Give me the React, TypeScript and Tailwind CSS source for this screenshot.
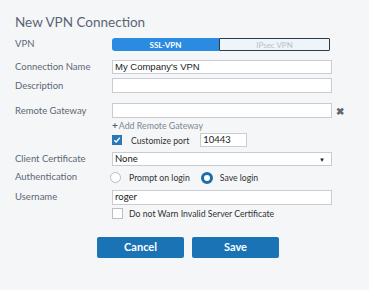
import React from "react";

const Label = ({ children }: { children: React.ReactNode }) => (
  <div className="w-[97px] shrink-0 text-[9.5px] text-[#5d6873]">{children}</div>
);

const Input = ({ value, className = "h-[15px] text-[9.5px]" }: { value?: string; className?: string }) => (
  <div
    className={`w-[220px] border border-[#c9cdd1] bg-white px-[2px] flex items-center text-[#222] leading-none ${className}`}
  >
    {value}
  </div>
);

export default function App() {
  return (
    <div
      className="w-[369px] h-[290px] bg-[#f5f6f8] pl-[15px] pt-[12px]"
      style={{ fontFamily: "Lato, 'Open Sans', sans-serif" }}
    >
      <div className="text-[13.5px] leading-[20px] text-[#5a6572]">New VPN Connection</div>

      <div className="mt-[6px] flex items-center h-[13px]">
        <Label>VPN</Label>
        <div className="flex h-[13px] w-[218px]">
          <div className="w-[107px] h-full bg-[#2a8be0] rounded-l-[3px] flex items-center justify-center text-[8px] font-bold text-white">
            SSL-VPN
          </div>
          <div className="flex-1 h-full border border-[#2c3b4a] bg-[#eef4f8] rounded-r-[1px] flex items-center justify-center text-[8px] text-[#b9c1c8]">
            IPsec VPN
          </div>
        </div>
      </div>

      <div className="mt-[9px] flex items-center">
        <Label>Connection Name</Label>
        <Input value="My Company's VPN" className="h-[14px] text-[9.5px] font-['Liberation_Sans',Arial,sans-serif]" />
      </div>

      <div className="mt-[4px] flex items-center">
        <Label>Description</Label>
        <Input />
      </div>

      <div className="mt-[10px] flex items-center">
        <Label>Remote Gateway</Label>
        <Input />
        <span className="ml-[4px] text-[10px] font-bold text-[#5d6873] leading-none">✖</span>
      </div>

      <div className="ml-[97px] mt-[1px] h-[12px] flex items-center text-[8.8px] text-[#7c8891]">
        <span className="font-bold text-[#56626d] text-[10px] leading-none mr-[1px]">+</span>Add Remote Gateway
      </div>

      <div className="ml-[97px] mt-[2px] flex items-center h-[14px]">
        <div className="w-[10px] h-[10px] bg-[#2a78b6] flex items-center justify-center">
          <svg width="8" height="8" viewBox="0 0 8 8">
            <path d="M1.2 4.2 L3.2 6 L6.8 1.8" stroke="white" strokeWidth="1.4" fill="none" />
          </svg>
        </div>
        <span className="ml-[9px] text-[8.7px] text-[#333]">Customize port</span>
        <div className="ml-[11px] h-[14px] w-[47px] border border-[#c9cdd1] bg-white px-[2px] flex items-center text-[9.5px] text-[#222]">
          10443
        </div>
      </div>

      <div className="mt-[5px] flex items-center">
        <Label>Client Certificate</Label>
        <div className="h-[14px] w-[220px] border border-[#c9cdd1] bg-white px-[2px] flex items-center justify-between text-[9.5px] text-[#222]">
          <span>None</span>
          <span className="text-[6px] mr-[4px]">▼</span>
        </div>
      </div>

      <div className="mt-[5px] flex items-center h-[12px]">
        <Label>Authentication</Label>
        <div className="w-[11px] h-[11px] rounded-full border border-[#b8bec4] bg-white ml-[-2px]" />
        <span className="ml-[8px] text-[8.7px] text-[#333]">Prompt on login</span>
        <div className="ml-[11px] w-[12px] h-[12px] rounded-full border-[3px] border-[#1f6ca8] bg-white" />
        <span className="ml-[7px] text-[8.7px] text-[#333]">Save login</span>
      </div>

      <div className="mt-[6px] flex items-center">
        <Label>Username</Label>
        <Input value="roger" />
      </div>

      <div className="ml-[97px] mt-[3px] flex items-center h-[12px]">
        <div className="w-[11px] h-[11px] border border-[#b8bec4] bg-white" />
        <span className="ml-[6px] text-[8.7px] text-[#333]">Do not Warn Invalid Server Certificate</span>
      </div>

      <div className="mt-[17px] ml-[82px] flex gap-[8px]">
        <div className="w-[87px] h-[21px] rounded-[2px] bg-[#1a73b5] flex items-center justify-center text-[11px] font-bold text-white">
          Cancel
        </div>
        <div className="w-[87px] h-[21px] rounded-[2px] bg-[#1a73b5] flex items-center justify-center text-[11px] font-bold text-white">
          Save
        </div>
      </div>
    </div>
  );
}
